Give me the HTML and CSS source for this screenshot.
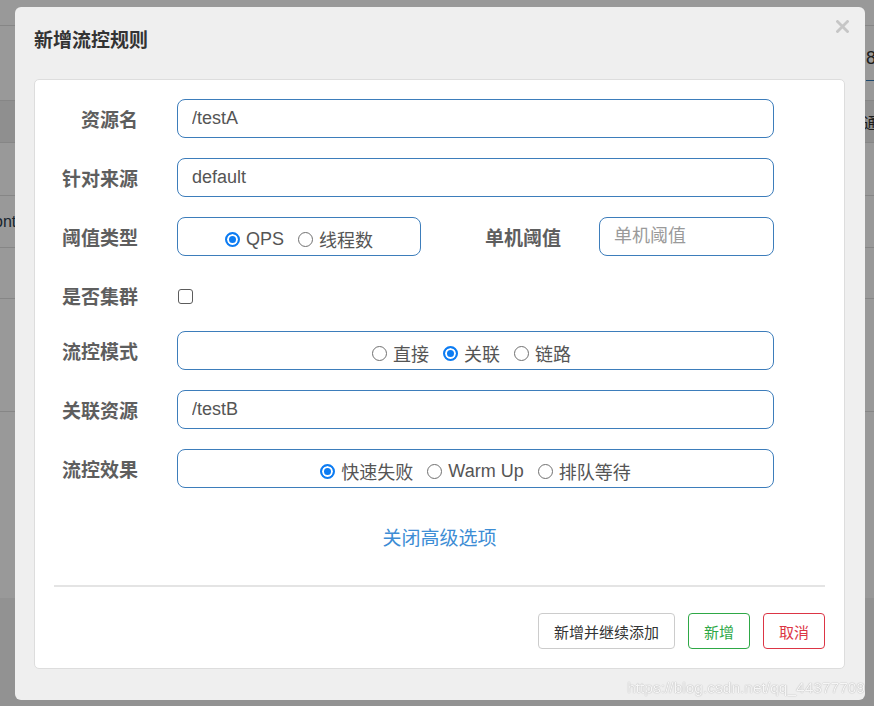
FILE: index.html
```html
<!DOCTYPE html>
<html lang="zh-CN">
<head>
<meta charset="utf-8">
<title>新增流控规则</title>
<link rel="stylesheet" href="styles.css">
</head>
<body>
<div class="bg-page">
  <div class="bg-row r1"></div>
  <div class="bg-row r2"><span class="bg-num">8</span></div>
  <div class="bg-row r3 band"><span class="bg-head">通过QPS</span></div>
  <div class="bg-row r4"></div>
  <div class="bg-row r5"><span class="bg-left">ont</span></div>
  <div class="bg-row r6"></div>
  <div class="bg-row r7"></div>
  <div class="bg-row r8"></div>
  <div class="bg-row r9"></div>
</div>
<div class="overlay"></div>

<div class="modal">
  <div class="modal-header">
    <h4 class="modal-title">新增流控规则</h4>
    <button class="close" type="button" aria-label="关闭">
      <svg width="13" height="13" viewBox="0 0 13 13"><path d="M1.5 1.5 L11.5 11.5 M11.5 1.5 L1.5 11.5" stroke="#c6c6c6" stroke-width="2.8" stroke-linecap="square" fill="none"/></svg>
    </button>
  </div>
  <div class="panel">
    <form class="form">
      <div class="form-row">
        <label class="form-label">资源名</label>
        <input class="form-input" type="text" value="/testA">
      </div>
      <div class="form-row">
        <label class="form-label">针对来源</label>
        <input class="form-input" type="text" value="default">
      </div>
      <div class="form-row">
        <label class="form-label">阈值类型</label>
        <div class="choice narrow">
          <label class="radio"><input type="radio" name="grade" checked><span>QPS</span></label>
          <label class="radio"><input type="radio" name="grade"><span>线程数</span></label>
        </div>
        <label class="form-label inline">单机阈值</label>
        <input class="form-input" type="text" placeholder="单机阈值">
      </div>
      <div class="form-row check-row">
        <label class="form-label">是否集群</label>
        <input class="checkbox" type="checkbox">
      </div>
      <div class="form-row">
        <label class="form-label">流控模式</label>
        <div class="choice shifted">
          <label class="radio"><input type="radio" name="strategy"><span>直接</span></label>
          <label class="radio"><input type="radio" name="strategy" checked><span>关联</span></label>
          <label class="radio"><input type="radio" name="strategy"><span>链路</span></label>
        </div>
      </div>
      <div class="form-row">
        <label class="form-label">关联资源</label>
        <input class="form-input" type="text" value="/testB">
      </div>
      <div class="form-row">
        <label class="form-label">流控效果</label>
        <div class="choice">
          <label class="radio"><input type="radio" name="behavior" checked><span>快速失败</span></label>
          <label class="radio"><input type="radio" name="behavior"><span>Warm Up</span></label>
          <label class="radio"><input type="radio" name="behavior"><span>排队等待</span></label>
        </div>
      </div>
    </form>
    <div class="toggle"><a class="toggle-link">关闭高级选项</a></div>
    <div class="divider"></div>
    <div class="actions">
      <button class="btn btn-default" type="button">新增并继续添加</button>
      <button class="btn btn-success" type="button">新增</button>
      <button class="btn btn-danger" type="button">取消</button>
    </div>
  </div>
</div>

<div class="watermark">https://blog.csdn.net/qq_44377709</div>
</body>
</html>
```

FILE: styles.css
```css
* {
  box-sizing: border-box;
}

html,
body {
  margin: 0;
  padding: 0;
}

body {
  position: relative;
  width: 874px;
  height: 706px;
  overflow: hidden;
  background: #fff;
  font-family: "Liberation Sans", "Noto Sans CJK SC", sans-serif;
}

/* background page (seen through the overlay) */
.bg-page {
  display: flex;
  flex-direction: column;
  height: 706px;
}

.bg-row {
  display: flex;
  flex: none;
  border-bottom: 1px solid #dfdfdf;
  background: #fff;
}

.r1 { height: 26px; }
.r2 { height: 75px; align-items: flex-start; }
.r3 { height: 42px; align-items: center; }
.r4 { height: 53px; }
.r5 { height: 52px; align-items: center; }
.r6 { height: 51px; }
.r7 { height: 113px; }
.r8 { height: 186px; border-bottom: none; }
.r9 { flex: 1; border-bottom: none; background: #f4f4f4; }

.band {
  background: #eeeeee;
}

.bg-num {
  margin-left: auto;
  margin-top: 10px;
  width: 8px;
  height: 45px;
  overflow: hidden;
  white-space: nowrap;
  font-size: 18px;
  line-height: 44px;
  color: #333;
  border-bottom: 1px solid #337ab7;
}

.bg-head {
  margin-left: auto;
  width: 11px;
  overflow: hidden;
  white-space: nowrap;
  font-size: 16px;
  color: #333;
}

.bg-left {
  display: block;
  width: 15px;
  overflow: hidden;
  white-space: nowrap;
  text-indent: -6px;
  font-size: 16px;
  color: #2c3e50;
}

.overlay {
  position: fixed;
  inset: 0;
  background: rgba(0, 0, 0, 0.4);
}

/* modal */
.modal {
  position: absolute;
  left: 15px;
  top: 7px;
  width: 850px;
  height: 693px;
  background: #efefef;
  border-radius: 6px;
  display: flex;
  flex-direction: column;
}

.modal-header {
  display: flex;
  align-items: center;
  height: 72px;
  flex: none;
  padding: 0 16px 6px 19px;
}

.modal-title {
  margin: 0;
  font-size: 19px;
  font-weight: bold;
  line-height: 1;
  color: #333;
}

.close {
  margin-left: auto;
  align-self: flex-start;
  margin-top: 13px;
  width: 13px;
  height: 13px;
  padding: 0;
  border: none;
  background: none;
  display: block;
}

.close svg {
  display: block;
}

.panel {
  margin: 0 20px 0 19px;
  background: #fff;
  border: 1px solid #dddddd;
  border-radius: 5px;
  padding: 19px 19px 19px 0;
  display: flex;
  flex-direction: column;
}

.form {
  display: flex;
  flex-direction: column;
  gap: 20px;
  padding-right: 51px;
  margin: 0;
}

.form-row {
  display: flex;
  height: 39px;
}

.form-label {
  flex: none;
  width: 103px;
  margin-right: 39px;
  padding-top: 4px;
  text-align: right;
  font-size: 19px;
  font-weight: bold;
  line-height: 35px;
  color: #5e5e5e;
  white-space: nowrap;
}

.form-label.inline {
  width: auto;
  margin-left: 64px;
  margin-right: 38px;
}

.form-input {
  flex: 1;
  min-width: 0;
  height: 39px;
  margin: 0;
  padding: 0 14px;
  border: 1px solid #3d7dbb;
  border-radius: 8px;
  font-family: inherit;
  font-size: 18px;
  color: #555;
  background: #fff;
  outline: none;
}

.form-input::placeholder {
  color: #9a9a9a;
}

.choice {
  flex: 1;
  display: flex;
  justify-content: center;
  align-items: center;
  height: 39px;
  padding-top: 5px;
  border: 1px solid #3d7dbb;
  border-radius: 8px;
}

.choice.narrow {
  flex: none;
  width: 244px;
}

.choice.shifted {
  padding-right: 8px;
}

.radio {
  display: flex;
  align-items: center;
  gap: 6px;
  margin: 0 7px;
  font-size: 18px;
  color: #555;
  white-space: nowrap;
}

.radio input {
  appearance: none;
  -webkit-appearance: none;
  flex: none;
  width: 15px;
  height: 15px;
  margin: 0;
  border: 1px solid #707070;
  border-radius: 50%;
  background: #fff;
}

.radio input:checked {
  border: 2px solid #0d7cf2;
  background: #0d7cf2;
  box-shadow: inset 0 0 0 2px #fff;
}

.check-row {
  height: 35px;
  align-items: flex-start;
}

.checkbox {
  appearance: none;
  -webkit-appearance: none;
  flex: none;
  width: 15px;
  height: 15px;
  margin: 13px 0 0 1px;
  border: 1px solid #5c5c5c;
  border-radius: 3px;
  background: #fff;
}

.toggle {
  margin-top: 36px;
  text-align: center;
  line-height: 30px;
  padding-left: 19px;
}

.toggle-link {
  font-size: 19px;
  color: #3d8dd5;
  text-decoration: none;
}

.divider {
  margin: 30px 0 0 19px;
  height: 2px;
  background: #e4e4e4;
}

.actions {
  display: flex;
  justify-content: flex-end;
  gap: 13px;
  margin-top: 26px;
}

.btn {
  height: 36px;
  padding: 0 15px;
  font-family: inherit;
  font-size: 15px;
  background: #fff;
  border: 1px solid #cccccc;
  border-radius: 4px;
  color: #333;
  white-space: nowrap;
}

.btn-success {
  border-color: #2ea846;
  color: #2ea846;
}

.btn-danger {
  border-color: #dc3545;
  color: #dc3545;
}

.watermark {
  position: fixed;
  right: 9px;
  bottom: 9px;
  font-size: 15.5px;
  line-height: 18px;
  color: rgba(255, 255, 255, 0.9);
  text-shadow: 0 0 1px rgba(0, 0, 0, 0.35), 0 0 2px rgba(0, 0, 0, 0.1);
  white-space: nowrap;
}
```
